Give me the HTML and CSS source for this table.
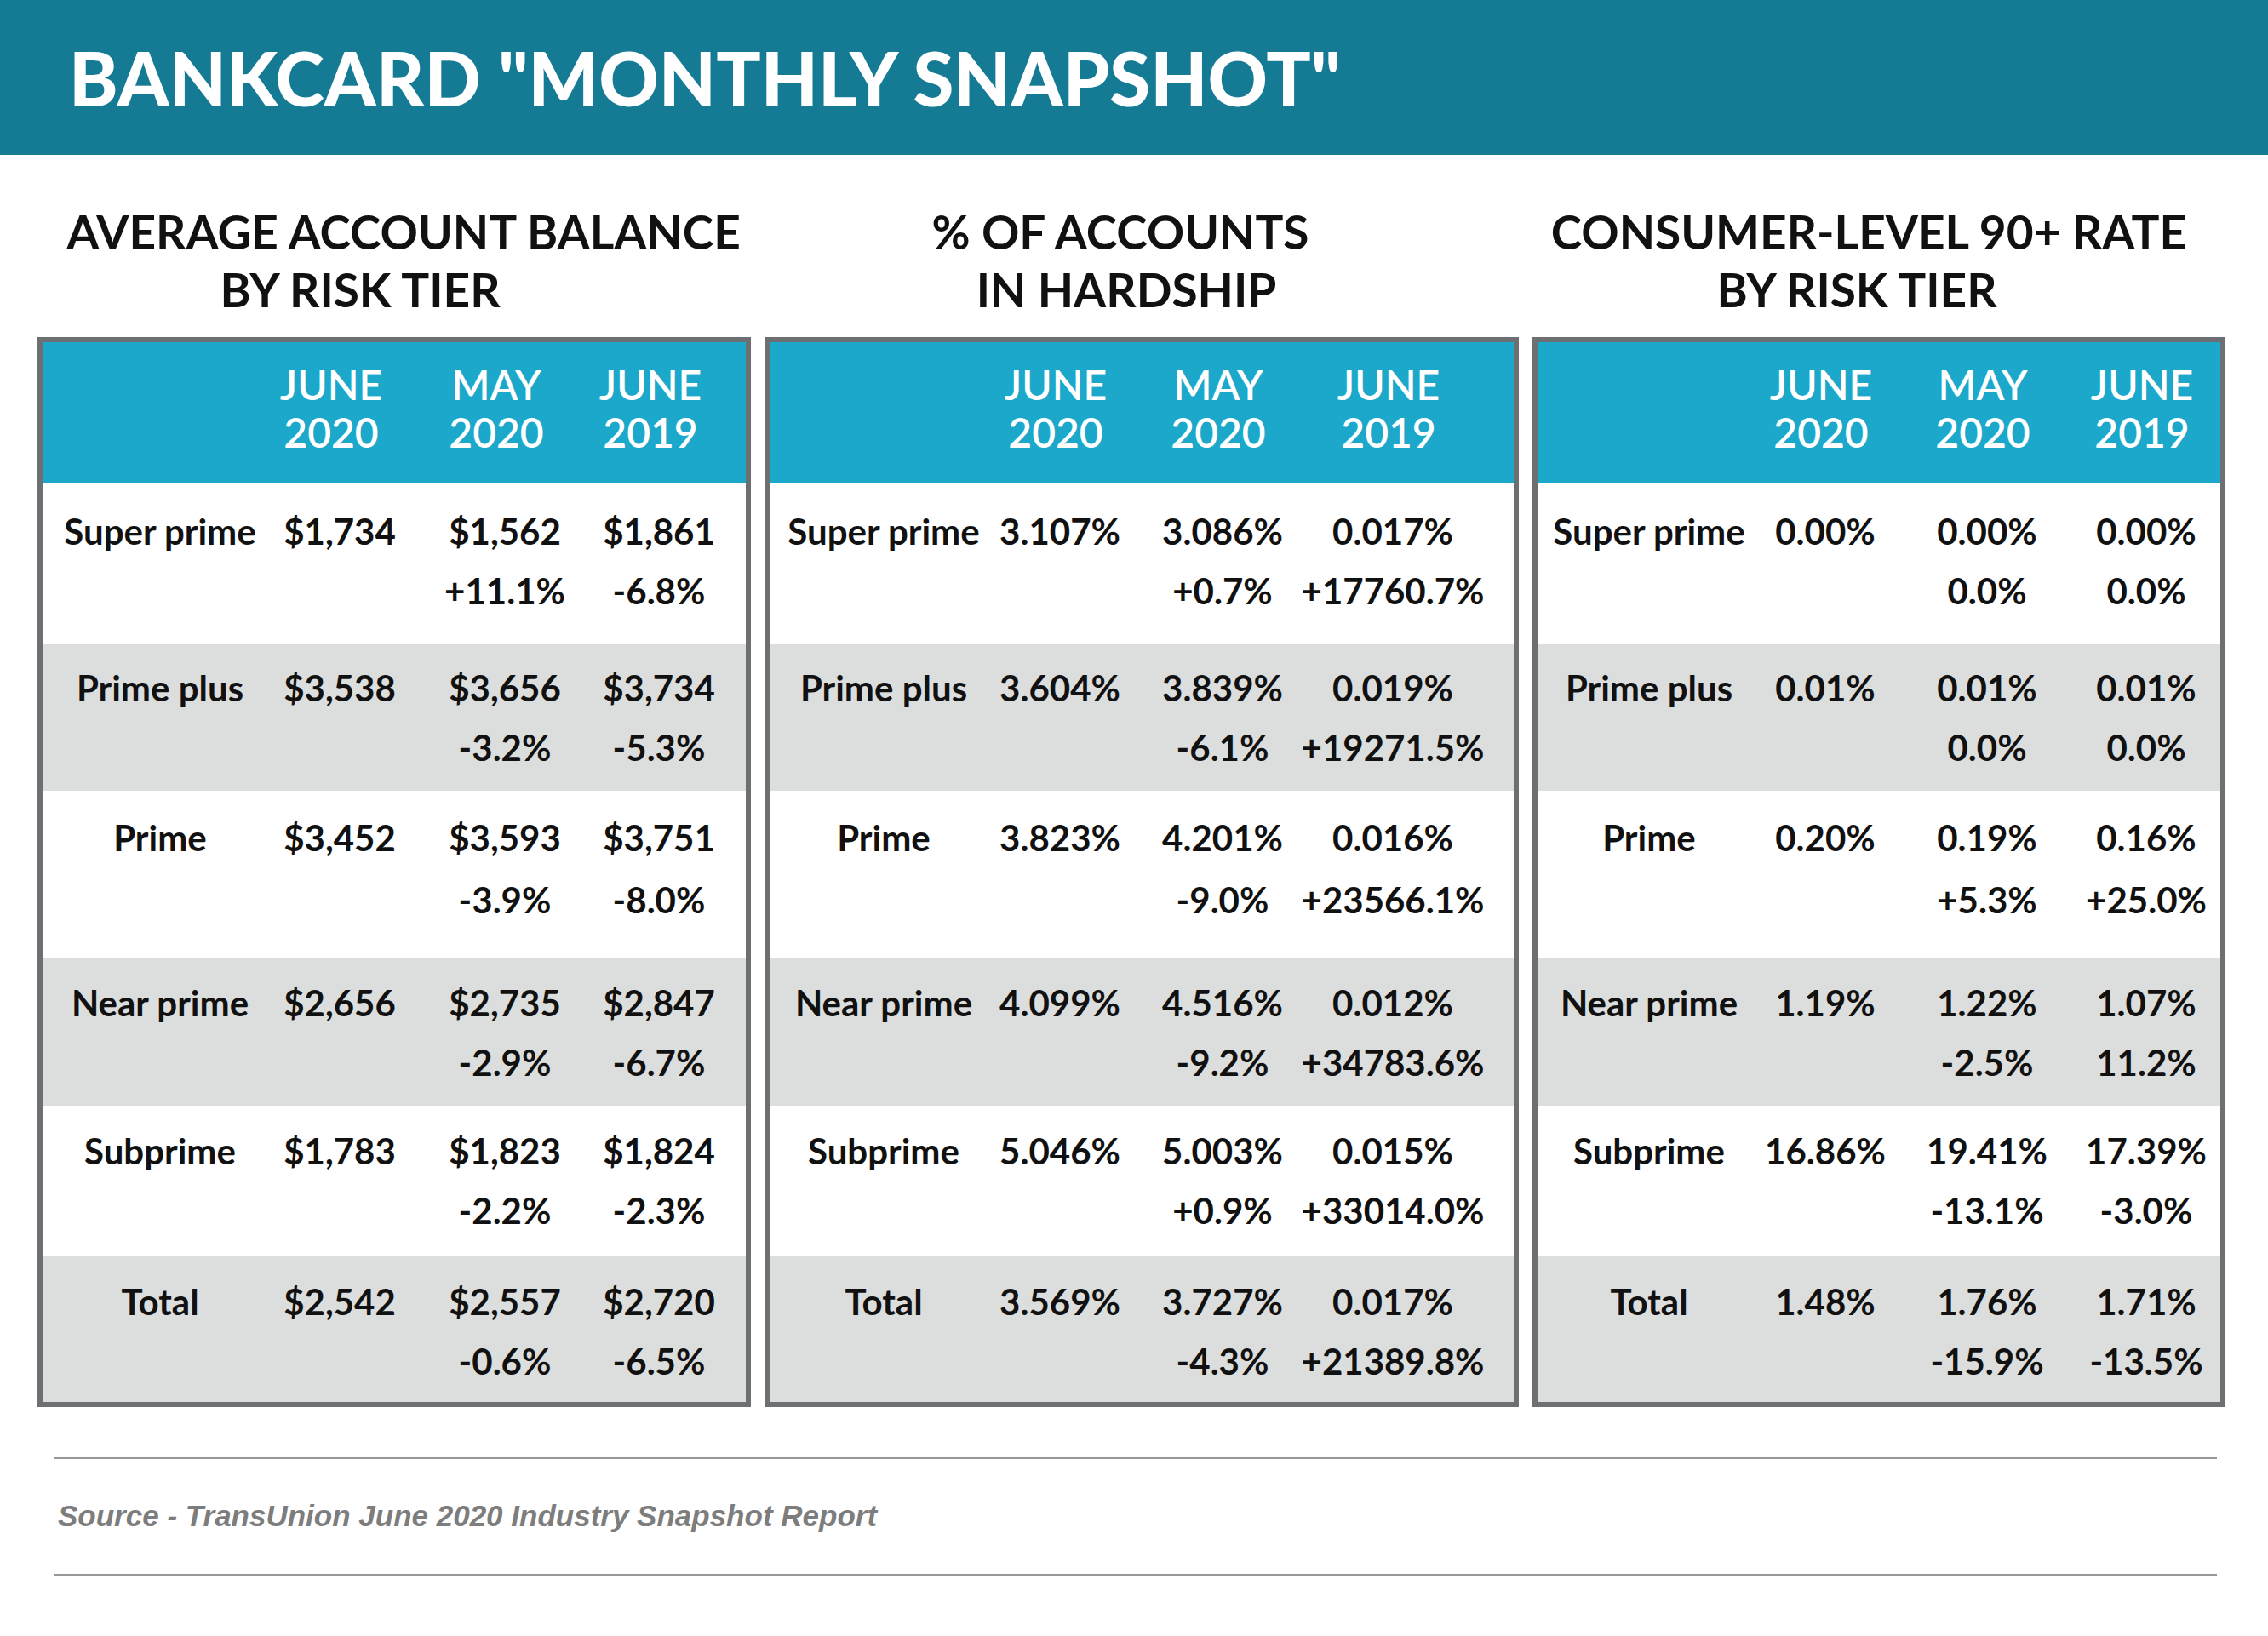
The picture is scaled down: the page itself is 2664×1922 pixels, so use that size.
FILE: index.html
```html
<!DOCTYPE html>
<html lang="en">
<head>
<meta charset="utf-8">
<title>Bankcard Monthly Snapshot</title>
<link rel="stylesheet" href="styles.css">
</head>
<body>
<header class="topbar">
  <h1 class="main-title">BANKCARD "MONTHLY SNAPSHOT"</h1>
</header>

<main class="panels">
  <section class="panel panel-balance">
    <h2 class="panel-title">
      <span class="tl tl-a">AVERAGE ACCOUNT BALANCE</span>
      <span class="tl tl-b">BY RISK TIER</span>
    </h2>
    <div class="table">
      <div class="row head">
        <div class="cell"></div>
        <div class="cell"><span>JUNE</span><span>2020</span></div>
        <div class="cell"><span>MAY</span><span>2020</span></div>
        <div class="cell"><span>JUNE</span><span>2019</span></div>
      </div>
      <div class="row">
        <div class="cell label"><span>Super prime</span></div>
        <div class="cell"><span>$1,734</span></div>
        <div class="cell"><span>$1,562</span><span>+11.1%</span></div>
        <div class="cell"><span>$1,861</span><span>-6.8%</span></div>
      </div>
      <div class="row alt">
        <div class="cell label"><span>Prime plus</span></div>
        <div class="cell"><span>$3,538</span></div>
        <div class="cell"><span>$3,656</span><span>-3.2%</span></div>
        <div class="cell"><span>$3,734</span><span>-5.3%</span></div>
      </div>
      <div class="row">
        <div class="cell label"><span>Prime</span></div>
        <div class="cell"><span>$3,452</span></div>
        <div class="cell"><span>$3,593</span><span>-3.9%</span></div>
        <div class="cell"><span>$3,751</span><span>-8.0%</span></div>
      </div>
      <div class="row alt">
        <div class="cell label"><span>Near prime</span></div>
        <div class="cell"><span>$2,656</span></div>
        <div class="cell"><span>$2,735</span><span>-2.9%</span></div>
        <div class="cell"><span>$2,847</span><span>-6.7%</span></div>
      </div>
      <div class="row">
        <div class="cell label"><span>Subprime</span></div>
        <div class="cell"><span>$1,783</span></div>
        <div class="cell"><span>$1,823</span><span>-2.2%</span></div>
        <div class="cell"><span>$1,824</span><span>-2.3%</span></div>
      </div>
      <div class="row alt">
        <div class="cell label"><span>Total</span></div>
        <div class="cell"><span>$2,542</span></div>
        <div class="cell"><span>$2,557</span><span>-0.6%</span></div>
        <div class="cell"><span>$2,720</span><span>-6.5%</span></div>
      </div>
    </div>
  </section>

  <section class="panel panel-hardship">
    <h2 class="panel-title">
      <span class="tl tl-a">% OF ACCOUNTS</span>
      <span class="tl tl-b">IN HARDSHIP</span>
    </h2>
    <div class="table">
      <div class="row head">
        <div class="cell"></div>
        <div class="cell"><span>JUNE</span><span>2020</span></div>
        <div class="cell"><span>MAY</span><span>2020</span></div>
        <div class="cell"><span>JUNE</span><span>2019</span></div>
      </div>
      <div class="row">
        <div class="cell label"><span>Super prime</span></div>
        <div class="cell"><span>3.107%</span></div>
        <div class="cell"><span>3.086%</span><span>+0.7%</span></div>
        <div class="cell"><span>0.017%</span><span>+17760.7%</span></div>
      </div>
      <div class="row alt">
        <div class="cell label"><span>Prime plus</span></div>
        <div class="cell"><span>3.604%</span></div>
        <div class="cell"><span>3.839%</span><span>-6.1%</span></div>
        <div class="cell"><span>0.019%</span><span>+19271.5%</span></div>
      </div>
      <div class="row">
        <div class="cell label"><span>Prime</span></div>
        <div class="cell"><span>3.823%</span></div>
        <div class="cell"><span>4.201%</span><span>-9.0%</span></div>
        <div class="cell"><span>0.016%</span><span>+23566.1%</span></div>
      </div>
      <div class="row alt">
        <div class="cell label"><span>Near prime</span></div>
        <div class="cell"><span>4.099%</span></div>
        <div class="cell"><span>4.516%</span><span>-9.2%</span></div>
        <div class="cell"><span>0.012%</span><span>+34783.6%</span></div>
      </div>
      <div class="row">
        <div class="cell label"><span>Subprime</span></div>
        <div class="cell"><span>5.046%</span></div>
        <div class="cell"><span>5.003%</span><span>+0.9%</span></div>
        <div class="cell"><span>0.015%</span><span>+33014.0%</span></div>
      </div>
      <div class="row alt">
        <div class="cell label"><span>Total</span></div>
        <div class="cell"><span>3.569%</span></div>
        <div class="cell"><span>3.727%</span><span>-4.3%</span></div>
        <div class="cell"><span>0.017%</span><span>+21389.8%</span></div>
      </div>
    </div>
  </section>

  <section class="panel panel-rate">
    <h2 class="panel-title">
      <span class="tl tl-a">CONSUMER-LEVEL 90+ RATE</span>
      <span class="tl tl-b">BY RISK TIER</span>
    </h2>
    <div class="table">
      <div class="row head">
        <div class="cell"></div>
        <div class="cell"><span>JUNE</span><span>2020</span></div>
        <div class="cell"><span>MAY</span><span>2020</span></div>
        <div class="cell"><span>JUNE</span><span>2019</span></div>
      </div>
      <div class="row">
        <div class="cell label"><span>Super prime</span></div>
        <div class="cell"><span>0.00%</span></div>
        <div class="cell"><span>0.00%</span><span>0.0%</span></div>
        <div class="cell"><span>0.00%</span><span>0.0%</span></div>
      </div>
      <div class="row alt">
        <div class="cell label"><span>Prime plus</span></div>
        <div class="cell"><span>0.01%</span></div>
        <div class="cell"><span>0.01%</span><span>0.0%</span></div>
        <div class="cell"><span>0.01%</span><span>0.0%</span></div>
      </div>
      <div class="row">
        <div class="cell label"><span>Prime</span></div>
        <div class="cell"><span>0.20%</span></div>
        <div class="cell"><span>0.19%</span><span>+5.3%</span></div>
        <div class="cell"><span>0.16%</span><span>+25.0%</span></div>
      </div>
      <div class="row alt">
        <div class="cell label"><span>Near prime</span></div>
        <div class="cell"><span>1.19%</span></div>
        <div class="cell"><span>1.22%</span><span>-2.5%</span></div>
        <div class="cell"><span>1.07%</span><span>11.2%</span></div>
      </div>
      <div class="row">
        <div class="cell label"><span>Subprime</span></div>
        <div class="cell"><span>16.86%</span></div>
        <div class="cell"><span>19.41%</span><span>-13.1%</span></div>
        <div class="cell"><span>17.39%</span><span>-3.0%</span></div>
      </div>
      <div class="row alt">
        <div class="cell label"><span>Total</span></div>
        <div class="cell"><span>1.48%</span></div>
        <div class="cell"><span>1.76%</span><span>-15.9%</span></div>
        <div class="cell"><span>1.71%</span><span>-13.5%</span></div>
      </div>
    </div>
  </section>
</main>

<footer class="source">
  <p class="source-text">Source - TransUnion June 2020 Industry Snapshot Report</p>
</footer>
</body>
</html>
```

FILE: styles.css
```css
* { box-sizing: border-box; }

html, body {
  margin: 0;
  padding: 0;
  background: #ffffff;
}

body {
  width: 2664px;
  font-family: "Lato", "Open Sans", sans-serif;
  color: #111111;
}

/* ---------- top bar ---------- */
.topbar {
  height: 182px;
  background: #157b94;
  display: flex;
  align-items: center;
  padding-left: 81px;
}

.main-title {
  margin: 0;
  font-size: 87px;
  line-height: 1;
  font-weight: 900;
  color: #ffffff;
  white-space: nowrap;
}

/* ---------- panels ---------- */
.panels {
  display: grid;
  grid-template-columns: 838px 886px 814px;
  column-gap: 16px;
  padding-left: 44px;
  margin-top: 56px;
}

.panel-title {
  margin: 0 0 22px 0;
  height: 136px;
  font-size: 55px;
  line-height: 68px;
  font-weight: 700;
  color: #111111;
  text-align: center;
  white-space: nowrap;
}

.tl { display: block; }

.panel-balance .tl-a { padding-left: 22px; }
.panel-balance .tl-b { padding-right: 80px; }
.panel-hardship .tl-a { padding-right: 50px; }
.panel-hardship .tl-b { padding-right: 36px; }
.panel-rate .tl-a { padding-right: 24px; }
.panel-rate .tl-b { padding-right: 52px; }

.table {
  border: 6px solid #6e6f73;
  background: #ffffff;
}

.row {
  display: grid;
  align-items: center;
  background: #ffffff;
}

.panel-balance .row { grid-template-columns: 268px 154px 234px 128px; padding-left: 4px; }
.panel-hardship .row { grid-template-columns: 268px 146px 236px 164px; }
.panel-rate .row { grid-template-columns: 262px 152px 228px 146px; }

.row.alt { background: #dcdedd; }

.row:nth-child(1) { height: 165px; padding-bottom: 9px; }
.row:nth-child(2) { height: 189px; padding-bottom: 6px; }
.row:nth-child(3) { height: 173px; }
.row:nth-child(4) { height: 197px; padding-bottom: 14px; }
.row:nth-child(5) { height: 173px; }
.row:nth-child(6) { height: 176px; }
.row:nth-child(7) { height: 172px; padding-top: 6px; }

.cell {
  display: flex;
  flex-direction: column;
  align-items: center;
  height: 140px;
  font-size: 42px;
  line-height: 70px;
  font-weight: 700;
  white-space: nowrap;
}

.row:nth-child(4) .cell {
  height: 146px;
  line-height: 73px;
}

.row.head {
  background: #1ba8ca;
}

.row.head .cell {
  height: 112px;
  padding-right: 10px;
  font-size: 48px;
  line-height: 56px;
  font-weight: 600;
  color: #ffffff;
}

.panel-balance .row.head .cell { padding-right: 20px; }

/* ---------- source footer ---------- */
.source {
  margin: 59px 0 0 64px;
  width: 2540px;
  border-top: 2px solid #979797;
  border-bottom: 2px solid #979797;
  padding: 48px 0 49px 4px;
}

.source-text {
  margin: 0;
  font-family: "Liberation Sans", Arial, sans-serif;
  font-style: italic;
  font-weight: 700;
  font-size: 35px;
  line-height: 38px;
  color: #7d7d7d;
}
```
